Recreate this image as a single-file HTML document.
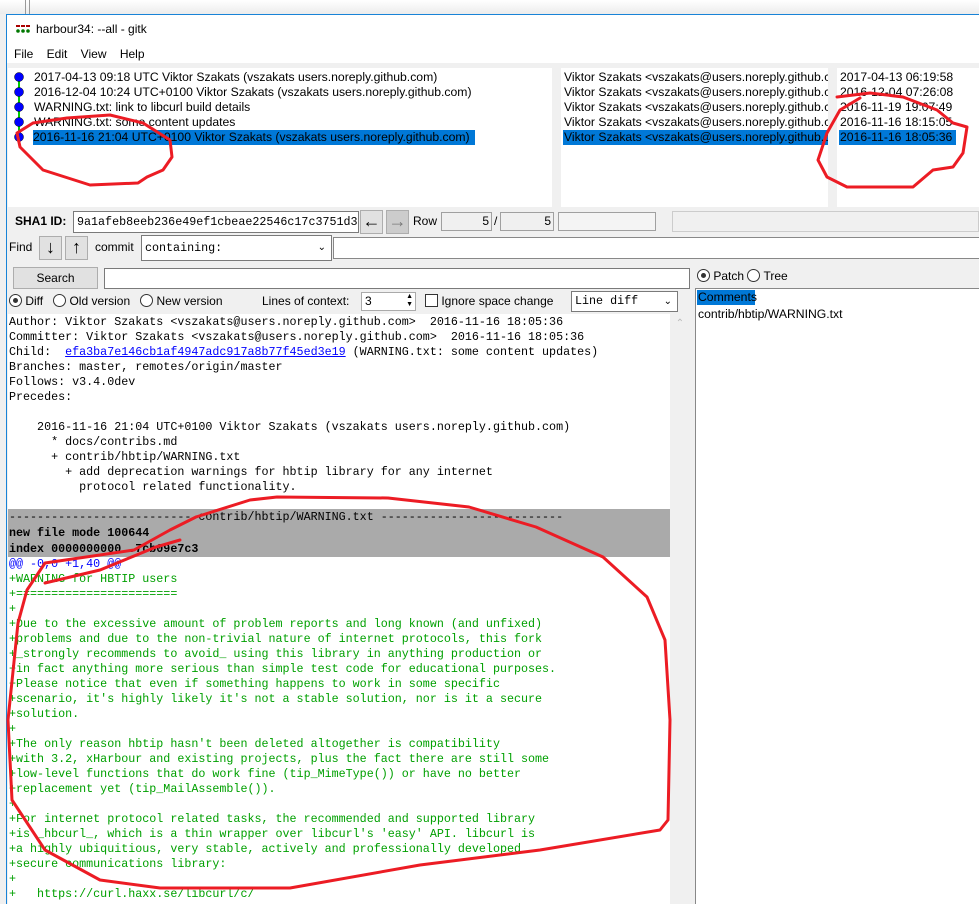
<!DOCTYPE html>
<html><head><meta charset="utf-8"><style>
*{margin:0;padding:0;box-sizing:border-box}
body{width:979px;height:904px;overflow:hidden;background:#f0f0f0;position:relative;font-family:"Liberation Sans",Arial,sans-serif;font-size:12px;color:#000}
.a{position:absolute}
.top{left:0;top:0;width:979px;height:14px;background:linear-gradient(#fff,#ececec)}
.win{left:6px;top:14px;width:973px;height:890px;border-left:1px solid #1883d7;border-top:1px solid #1883d7;background:#f0f0f0}
.tb{left:7px;top:15px;width:972px;height:48px;background:#fff}
.pane{background:#fff;top:68px;height:139px}
.row{position:absolute;left:0;height:15px;line-height:15px;white-space:nowrap;font-size:12.2px}
.sel{background:#0078d7;color:#000}
.mono{font-family:"Liberation Mono","Courier New",monospace;font-size:11.7px}
.inp{background:#fff;border:1px solid #7a7a7a}
.btn{background:#e1e1e1;border:1px solid #adadad}
.ro{background:#f0f0f0;border:1px solid #a0a0a0}
pre{font-family:"Liberation Mono","Courier New",monospace;font-size:11.7px;line-height:15px;white-space:pre}
.g{color:#00a000}
.radio{display:inline-block;width:13px;height:13px;border:1px solid #333;border-radius:50%;vertical-align:-2px;background:#fff;position:relative}
.radio.on::after{content:"";position:absolute;left:3px;top:3px;width:5px;height:5px;border-radius:50%;background:#333}
</style></head><body>
<div class="a top"></div>
<div class="a" style="left:25px;top:0;width:1px;height:14px;background:#999"></div>
<div class="a" style="left:29px;top:0;width:1px;height:14px;background:#999"></div>
<div class="a win"></div>
<div class="a tb"></div>
<svg class="a" style="left:16px;top:25px" width="16" height="10"><g fill="#a00"><rect x="0" y="0" width="4" height="2"/><rect x="5" y="0" width="4" height="2"/><rect x="10" y="0" width="4" height="2"/></g><g fill="#070"><circle cx="2" cy="6" r="1.8"/><circle cx="7" cy="6" r="1.8"/><circle cx="12" cy="6" r="1.8"/></g></svg>
<div class="a" style="left:36px;top:22px;font-size:12px">harbour34: --all - gitk</div>
<div class="a" style="left:14px;top:47px;font-size:12px;word-spacing:0">File&nbsp;&nbsp;&nbsp; Edit&nbsp;&nbsp;&nbsp; View&nbsp;&nbsp;&nbsp; Help</div>

<div class="a pane" style="left:8px;width:544px">
 <div class="a" style="left:10px;top:8px;width:2px;height:62px;background:#0c0"></div>
 <svg class="a" style="left:5px;top:3px" width="12" height="72"><g fill="#00f" stroke="#000" stroke-width=".5"><circle cx="6" cy="6" r="4.5"/><circle cx="6" cy="21" r="4.5"/><circle cx="6" cy="36" r="4.5"/><circle cx="6" cy="51" r="4.5"/><circle cx="6" cy="66" r="4.5"/></g></svg>
 <div class="row" style="left:26px;top:2px">2017-04-13 09:18 UTC Viktor Szakats (vszakats users.noreply.github.com)</div>
 <div class="row" style="left:26px;top:17px">2016-12-04 10:24 UTC+0100 Viktor Szakats (vszakats users.noreply.github.com)</div>
 <div class="row" style="left:26px;top:32px">WARNING.txt: link to libcurl build details</div>
 <div class="row" style="left:26px;top:47px">WARNING.txt: some content updates</div>
 <div class="row sel" style="left:25px;top:62px;width:442px">2016-11-16 21:04 UTC+0100 Viktor Szakats (vszakats users.noreply.github.com)</div>
</div>
<div class="a pane" style="left:561px;width:267px;overflow:hidden">
 <div class="row" style="left:3px;top:2px">Viktor Szakats &lt;vszakats@users.noreply.github.com&gt;</div>
 <div class="row" style="left:3px;top:17px">Viktor Szakats &lt;vszakats@users.noreply.github.com&gt;</div>
 <div class="row" style="left:3px;top:32px">Viktor Szakats &lt;vszakats@users.noreply.github.com&gt;</div>
 <div class="row" style="left:3px;top:47px">Viktor Szakats &lt;vszakats@users.noreply.github.com&gt;</div>
 <div class="row sel" style="left:2px;top:62px;width:270px;padding-left:1px">Viktor Szakats &lt;vszakats@users.noreply.github.com&gt;</div>
</div>
<div class="a pane" style="left:837px;width:142px">
 <div class="row" style="left:3px;top:2px">2017-04-13 06:19:58</div>
 <div class="row" style="left:3px;top:17px">2016-12-04 07:26:08</div>
 <div class="row" style="left:3px;top:32px">2016-11-19 19:07:49</div>
 <div class="row" style="left:3px;top:47px">2016-11-16 18:15:05</div>
 <div class="row sel" style="left:2px;top:62px;width:117px;padding-left:1px">2016-11-16 18:05:36</div>
</div>

<div class="a" style="left:15px;top:214px;font-weight:bold">SHA1 ID:</div>
<div class="a inp mono" style="left:73px;top:211px;width:286px;height:22px;line-height:20px;padding-left:3px;overflow:hidden">9a1afeb8eeb236e49ef1cbeae22546c17c3751d3</div>
<div class="a btn" style="left:360px;top:210px;width:23px;height:24px;font-size:18px;line-height:21px;text-align:center">&#8592;</div>
<div class="a btn" style="left:386px;top:210px;width:23px;height:24px;font-size:18px;line-height:21px;text-align:center;color:#777;background:#ccc">&#8594;</div>
<div class="a" style="left:413px;top:214px">Row</div>
<div class="a ro" style="left:441px;top:212px;width:51px;height:19px;text-align:right;padding-right:2px;line-height:17px">5</div>
<div class="a" style="left:494px;top:214px">/</div>
<div class="a ro" style="left:500px;top:212px;width:54px;height:19px;text-align:right;padding-right:2px;line-height:17px">5</div>
<div class="a ro" style="left:558px;top:212px;width:98px;height:19px;background:#f4f4f4"></div>
<div class="a ro" style="left:672px;top:211px;width:307px;height:21px;border-color:#ccc"></div>

<div class="a" style="left:9px;top:240px;font-size:12px">Find</div>
<div class="a btn" style="left:39px;top:236px;width:23px;height:24px;font-size:18px;line-height:21px;text-align:center">&#8595;</div>
<div class="a btn" style="left:65px;top:236px;width:23px;height:24px;font-size:18px;line-height:21px;text-align:center">&#8593;</div>
<div class="a" style="left:95px;top:240px">commit</div>
<div class="a inp mono" style="left:141px;top:235px;width:191px;height:26px;line-height:24px;padding-left:3px">containing:<span style="position:absolute;right:5px;top:0;font-family:'Liberation Sans';font-size:10px">&#8964;</span></div>
<div class="a" style="left:333px;top:237px;width:646px;height:22px;background:#fff;border:1px solid #888;border-right:0"></div>

<div class="a btn" style="left:13px;top:267px;width:85px;height:22px;text-align:center;line-height:20px;font-size:12px">Search</div>
<div class="a inp" style="left:104px;top:268px;width:586px;height:21px"></div>
<div class="a" style="left:697px;top:269px"><span class="radio on"></span> Patch <span class="radio"></span> Tree</div>

<div class="a" style="left:9px;top:294px"><span class="radio on"></span> Diff&nbsp;&nbsp; <span class="radio"></span> Old version&nbsp;&nbsp; <span class="radio"></span> New version</div>
<div class="a" style="left:262px;top:294px">Lines of context:</div>
<div class="a inp" style="left:361px;top:292px;width:55px;height:19px;border-color:#aaa;padding-left:3px;line-height:17px">3<span style="position:absolute;right:2px;top:0;font-size:7px;line-height:8px">&#9650;<br>&#9660;</span></div>
<div class="a" style="left:425px;top:294px"><span style="display:inline-block;width:13px;height:13px;border:1px solid #333;background:#fff;vertical-align:-2px"></span> Ignore space change</div>
<div class="a inp mono" style="left:571px;top:291px;width:107px;height:21px;line-height:19px;padding-left:3px">Line diff<span style="position:absolute;right:5px;top:0;font-family:'Liberation Sans';font-size:10px">&#8964;</span></div>

<div class="a" style="left:8px;top:314px;width:662px;height:590px;background:#fff;overflow:hidden">
<pre style="position:absolute;left:1px;top:1px">Author: Viktor Szakats &lt;vszakats@users.noreply.github.com&gt;  2016-11-16 18:05:36
Committer: Viktor Szakats &lt;vszakats@users.noreply.github.com&gt;  2016-11-16 18:05:36
Child:  <span style="color:#00f;text-decoration:underline">efa3ba7e146cb1af4947adc917a8b77f45ed3e19</span> (WARNING.txt: some content updates)
Branches: master, remotes/origin/master
Follows: v3.4.0dev
Precedes:

    2016-11-16 21:04 UTC+0100 Viktor Szakats (vszakats users.noreply.github.com)
      * docs/contribs.md
      + contrib/hbtip/WARNING.txt
        + add deprecation warnings for hbtip library for any internet
          protocol related functionality.</pre>
<div style="position:absolute;left:0;top:195px;width:662px;height:48px;background:#aaa"></div>
<pre style="position:absolute;left:1px;top:195px;line-height:16px">-------------------------- contrib/hbtip/WARNING.txt --------------------------
<b>new file mode 100644</b>
<b>index 0000000000..7cb09e7c3</b></pre>
<pre style="position:absolute;left:1px;top:243px"><span style="color:#00f">@@ -0,0 +1,40 @@</span>
<span class="g">+WARNING for HBTIP users
+=======================
+
+Due to the excessive amount of problem reports and long known (and unfixed)
+problems and due to the non-trivial nature of internet protocols, this fork
+_strongly recommends to avoid_ using this library in anything production or
+in fact anything more serious than simple test code for educational purposes.
+Please notice that even if something happens to work in some specific
+scenario, it's highly likely it's not a stable solution, nor is it a secure
+solution.
+
+The only reason hbtip hasn't been deleted altogether is compatibility
+with 3.2, xHarbour and existing projects, plus the fact there are still some
+low-level functions that do work fine (tip_MimeType()) or have no better
+replacement yet (tip_MailAssemble()).
+
+For internet protocol related tasks, the recommended and supported library
+is _hbcurl_, which is a thin wrapper over libcurl's 'easy' API. libcurl is
+a highly ubiquitious, very stable, actively and professionally developed
+secure communications library:
+
+   https://curl.haxx.se/libcurl/c/</span></pre>
</div>
<div class="a" style="left:670px;top:314px;width:20px;height:590px;background:#f0f0f0"><div style="text-align:center;color:#bbb;font-size:10px;margin-top:4px">&#8963;</div></div>
<div class="a" style="left:695px;top:288px;width:284px;height:616px;background:#fff;border-left:1px solid #888;border-top:1px solid #888">
 <div class="row sel" style="left:1px;top:1px;width:58px;padding-left:1px">Comments</div>
 <div class="row" style="left:2px;top:18px">contrib/hbtip/WARNING.txt</div>
</div>

<svg class="a" style="left:0;top:0" width="979" height="904" fill="none" stroke="#ec1c24" stroke-width="3" stroke-linejoin="round" stroke-linecap="round">
<path d="M33,123 L67,118 L110,115 L143,123 L170,140 L172,157 L163,170 L147,177 L138,183 L90,185 L43,170 L20,147 L17,133 L33,123"/>
<path d="M837,97 L870,93 L903,97 L937,110 L953,123 L967,127 L963,153 L953,167 L933,170 L913,187 L847,187 L827,177 L818,160 L827,133 L840,110 L860,98"/>
<path d="M196,517 L250,500 L277,497 L388,498 L469,507 L536,527 L603,557 L647,597 L665,640 L670,720 L668,820 L660,830 L540,850 L420,865 L290,888 L160,888 L100,880 L45,850 L12,800 L8,720 L18,623 L27,590 L45,563 L134,550 L170,530 L196,517"/>
<path d="M45,583 L100,570 L156,547 L180,540"/>
</svg>
</body></html>
